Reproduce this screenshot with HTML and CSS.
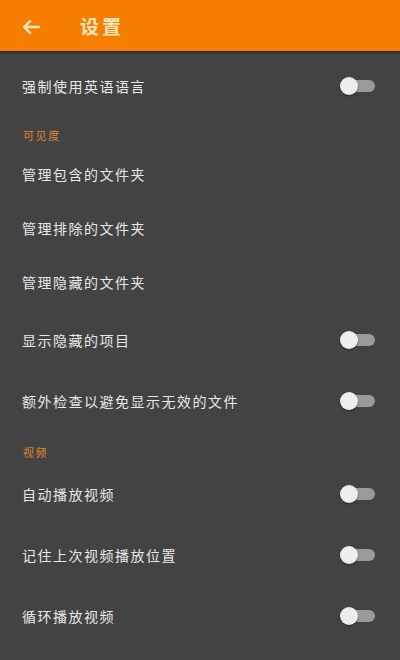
FILE: index.html
```html
<!DOCTYPE html>
<html lang="zh">
<head>
<meta charset="utf-8">
<link rel="stylesheet" href="styles.css">
</head>
<body>
<div class="app">
  <header class="topbar">
    <svg class="back" width="18" height="14" viewBox="0 0 18 14" aria-hidden="true">
      <path d="M17 7H2.5M8 1.2L2.2 7L8 12.8" fill="none" stroke="#fbe6bd" stroke-width="2.4" stroke-linecap="round" stroke-linejoin="round"/>
    </svg>
    <h1 class="title">设置</h1>
  </header>
  <main class="list">
    <div class="row toggle-row first"><span class="label">强制使用英语语言</span><span class="switch"><span class="thumb"></span></span></div>
    <div class="section sec1">可见度</div>
    <div class="row plain"><span class="label">管理包含的文件夹</span></div>
    <div class="row plain"><span class="label">管理排除的文件夹</span></div>
    <div class="row plain"><span class="label">管理隐藏的文件夹</span></div>
    <div class="row toggle-row"><span class="label">显示隐藏的项目</span><span class="switch"><span class="thumb"></span></span></div>
    <div class="row toggle-row"><span class="label">额外检查以避免显示无效的文件</span><span class="switch"><span class="thumb"></span></span></div>
    <div class="section sec2">视频</div>
    <div class="row toggle-row"><span class="label">自动播放视频</span><span class="switch"><span class="thumb"></span></span></div>
    <div class="row toggle-row"><span class="label">记住上次视频播放位置</span><span class="switch"><span class="thumb"></span></span></div>
    <div class="row toggle-row"><span class="label">循环播放视频</span><span class="switch"><span class="thumb"></span></span></div>
  </main>
</div>
</body>
</html>
```
FILE: styles.css
```css
* { box-sizing: border-box; }
html, body {
  margin: 0;
  padding: 0;
  background: #434343;
}
body {
  width: 400px;
  height: 660px;
  overflow: hidden;
  font-family: "Noto Sans CJK SC", "Noto Sans", sans-serif;
}
.app {
  width: 400px;
  height: 660px;
  background: #434343;
}
.topbar {
  height: 51px;
  background: #f57d00;
  display: flex;
  align-items: center;
  padding-left: 22px;
  box-shadow: 0 2px 2px rgba(0, 0, 0, 0.35);
  position: relative;
  z-index: 1;
}
.back {
  display: block;
  margin-top: 2px;
}
.title {
  margin: 0 0 0 40px;
  font-size: 19px;
  font-weight: 700;
  letter-spacing: 3px;
  color: #fbe6bd;
  line-height: 24px;
}
.list {
  display: flex;
  flex-direction: column;
}
.row {
  display: flex;
  align-items: center;
  justify-content: space-between;
  padding: 0 25px 0 22px;
}
.row.plain { height: 54px; }
.row.toggle-row { height: 61px; }
.row.first { height: 62px; margin-top: 4px; }
.label {
  font-size: 14px;
  letter-spacing: 1.5px;
  color: #e8e8e8;
  line-height: 20px;
}
.section {
  padding-left: 23px;
  font-size: 11px;
  line-height: 14px;
  letter-spacing: 1.6px;
  color: #e0852a;
}
.sec1 { padding-top: 11px; padding-bottom: 5px; }
.sec2 { padding-top: 14px; padding-bottom: 4px; }
.switch {
  position: relative;
  width: 34px;
  height: 12px;
  border-radius: 6px;
  background: #9a9a9a;
  flex: none;
}
.thumb {
  position: absolute;
  left: -1px;
  top: -3px;
  width: 18px;
  height: 18px;
  border-radius: 50%;
  background: #eeeeee;
  box-shadow: 0 1px 2px rgba(0, 0, 0, 0.4);
}
```
